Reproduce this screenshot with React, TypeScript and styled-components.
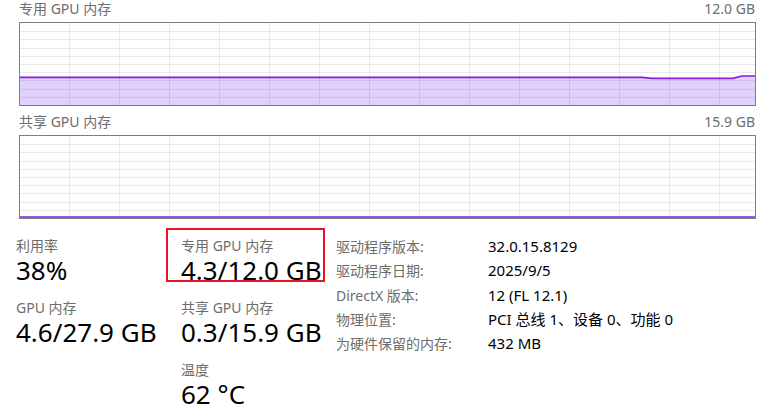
import styled, { createGlobalStyle } from 'styled-components'

const GlobalStyle = createGlobalStyle`
  html, body {
    margin: 0;
    padding: 0;
    background: #ffffff;
  }
  body {
    font-family: "Noto Sans", "Noto Sans CJK SC", sans-serif;
  }
`

const GRID_W = 735
const GRID_H = 82

const Chart = ({ line }: { line: string }) => {
  const rows = Array.from({ length: 9 }, (_, i) => Math.round((i + 1) * 8.2))
  const cols = Array.from({ length: 14 }, (_, i) => 49 + i * 50)
  return (
    <svg width={GRID_W} height={GRID_H} viewBox={`0 0 ${GRID_W} ${GRID_H}`}>
      <path d={`${line} L${GRID_W} ${GRID_H} L0 ${GRID_H} Z`} fill="#e0d0fc" />
      {rows.map((y) => (
        <line key={'r' + y} x1={0} x2={GRID_W} y1={y + 0.5} y2={y + 0.5} stroke="rgba(0,0,0,0.08)" strokeWidth={1} />
      ))}
      {cols.map((x) => (
        <line key={'c' + x} x1={x + 0.5} x2={x + 0.5} y1={0} y2={GRID_H} stroke="rgba(0,0,0,0.08)" strokeWidth={1} />
      ))}
      <path d={line} fill="none" stroke="#861de0" strokeWidth={1.7} />
    </svg>
  )
}

const App = () => {
  return (
    <Page>
      <GlobalStyle />
      <ChartBlock>
        <ChartHeader>
          <span>专用 GPU 内存</span>
          <span>12.0 GB</span>
        </ChartHeader>
        <ChartFrame>
          <Chart line="M0 54.3 L622 54.3 L632 55.3 L713 55.3 L722 53 L735 53" />
        </ChartFrame>
      </ChartBlock>
      <ChartBlock gap={7}>
        <ChartHeader>
          <span>共享 GPU 内存</span>
          <span>15.9 GB</span>
        </ChartHeader>
        <ChartFrame>
          <Chart line="M0 81 L735 81" />
        </ChartFrame>
      </ChartBlock>

      <Stats>
        <StatColumn w={165}>
          <Stat>
            <StatLabel>利用率</StatLabel>
            <StatValue>38%</StatValue>
          </Stat>
          <Stat>
            <StatLabel>GPU 内存</StatLabel>
            <StatValue>4.6/27.9 GB</StatValue>
          </Stat>
        </StatColumn>
        <StatColumn w={155}>
          <Stat>
            <StatLabel>专用 GPU 内存</StatLabel>
            <StatValue>4.3/12.0 GB</StatValue>
            <Highlight />
          </Stat>
          <Stat>
            <StatLabel>共享 GPU 内存</StatLabel>
            <StatValue>0.3/15.9 GB</StatValue>
          </Stat>
          <Stat>
            <StatLabel>温度</StatLabel>
            <StatValue>62 °C</StatValue>
          </Stat>
        </StatColumn>
        <InfoTable>
          <InfoLabel>驱动程序版本:</InfoLabel>
          <InfoValue>32.0.15.8129</InfoValue>
          <InfoLabel>驱动程序日期:</InfoLabel>
          <InfoValue>2025/9/5</InfoValue>
          <InfoLabel>DirectX 版本:</InfoLabel>
          <InfoValue>12 (FL 12.1)</InfoValue>
          <InfoLabel>物理位置:</InfoLabel>
          <InfoValue>PCI 总线 1、设备 0、功能 0</InfoValue>
          <InfoLabel>为硬件保留的内存:</InfoLabel>
          <InfoValue>432 MB</InfoValue>
        </InfoTable>
      </Stats>
    </Page>
  )
}

export default App

const Page = styled.div`
  width: 781px;
  height: 413px;
  overflow: hidden;
  background: #ffffff;
  color: #000000;
`

const ChartBlock = styled.div<{ gap?: number }>`
  margin: ${({ gap }) => gap ?? 0}px 26px 0 19px;
`

const ChartHeader = styled.div`
  display: flex;
  justify-content: space-between;
  font-size: 14px;
  line-height: 18px;
  color: #6d6d6d;
  margin-bottom: 4px;
`

const ChartFrame = styled.div`
  width: ${GRID_W}px;
  height: ${GRID_H}px;
  border: 1px solid #7d7d7d;
  background: #ffffff;
  svg {
    display: block;
  }
`

const Stats = styled.div`
  display: flex;
  align-items: flex-start;
  margin-top: 18px;
  padding-left: 16px;
`

const StatColumn = styled.div<{ w: number }>`
  width: ${({ w }) => w}px;
  display: flex;
  flex-direction: column;
  gap: 14px;
`

const Stat = styled.div`
  position: relative;
  display: flex;
  flex-direction: column;
`

const StatLabel = styled.div`
  font-size: 14px;
  line-height: 18px;
  color: #6d6d6d;
`

const StatValue = styled.div`
  font-size: 26px;
  line-height: 30px;
  color: #000000;
  white-space: nowrap;
`

const Highlight = styled.div`
  position: absolute;
  left: -15px;
  top: -9px;
  width: 159px;
  height: 54px;
  box-sizing: border-box;
  border: 2px solid #e81224;
  pointer-events: none;
`

const InfoTable = styled.div`
  display: grid;
  grid-template-columns: 152px auto;
  grid-auto-rows: 24.25px;
  margin-top: -3px;
  align-items: baseline;
`

const InfoLabel = styled.div`
  font-size: 14px;
  line-height: 24.25px;
  color: #6d6d6d;
  white-space: nowrap;
`

const InfoValue = styled.div`
  font-size: 15px;
  line-height: 24.25px;
  color: #000000;
  white-space: nowrap;
`
